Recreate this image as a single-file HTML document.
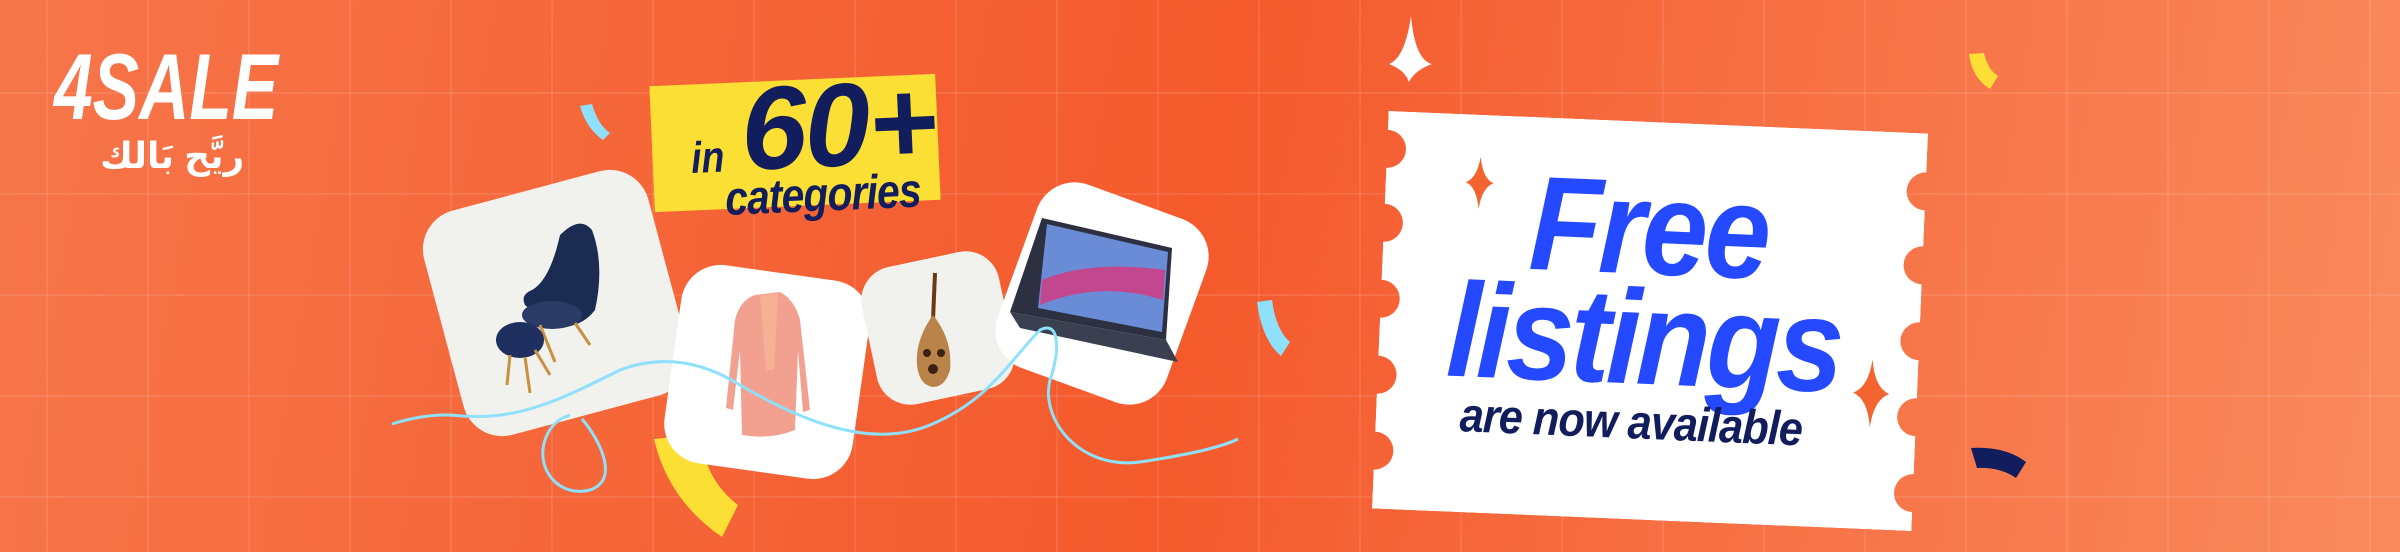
<!DOCTYPE html>
<html><head><meta charset="utf-8"><style>
*{margin:0;padding:0;box-sizing:border-box}
body{width:2400px;height:552px;overflow:hidden;position:relative;font-family:"Liberation Sans",sans-serif;
background:linear-gradient(100deg,#f6764a 0%,#f5673a 25%,#f45a2c 50%,#f6693d 65%,#f98a5c 100%);}
.grid{position:absolute;inset:0;background-image:linear-gradient(90deg,rgba(255,255,255,.09) 2px,transparent 2px),linear-gradient(0deg,rgba(255,255,255,.09) 2px,transparent 2px);background-size:101px 101px;background-position:46px 94px}
.abs{position:absolute}
.card{position:absolute;border-radius:40px}
.t{position:absolute;white-space:nowrap;font-weight:bold;font-style:italic;transform-origin:left top}
</style></head><body>
<div class="grid"></div>

<div class="t" style="left:54px;top:40px;font-size:94px;color:#fff;letter-spacing:0px;transform:scaleX(.74);line-height:1">4SALE</div>
<div class="t" style="left:100px;top:134px;font-size:36px;color:#fff;font-style:normal;font-family:'Liberation Sans','DejaVu Sans',sans-serif;line-height:1.2" dir="rtl">ريَّح بَالك</div>

<!-- confetti -->
<svg class="abs" style="left:0;top:0" width="2400" height="552">
<path d="M580 106 L592 104 Q598 125 610 133 L603 140 Q586 128 580 106Z" fill="#8ee0fb"/>
<path d="M654 439 L700 434 Q705 480 738 505 L722 537 Q668 500 654 439Z" fill="#fbdf35"/>
<path d="M1257 302 L1272 300 Q1276 330 1290 342 L1281 356 Q1262 340 1257 302Z" fill="#8ee0fb"/>
<path d="M1969 54 L1984 53 Q1988 70 1998 76 L1990 89 Q1972 78 1969 54Z" fill="#fbdf35"/>
<path d="M1971 448 Q2005 446 2026 462 L2016 478 Q2000 467 1977 468Z" fill="#111d5c"/>
<path d="M1411 16 Q1415 60 1432 64 Q1415 70 1409 82 Q1405 70 1389 64 Q1405 58 1411 16Z" fill="#fff"/>
</svg>

<!-- chair card -->
<div class="card" style="left:440px;top:187px;width:232px;height:232px;background:#f1f2ee;transform:rotate(-15deg)"></div>
<svg class="abs" style="left:480px;top:205px" width="170" height="200">
<path d="M80 30 Q100 10 112 25 Q125 60 115 105 Q100 125 70 122 L45 100 Q40 90 52 85 Q70 75 80 30Z" fill="#1c2b52"/>
<ellipse cx="72" cy="110" rx="30" ry="14" fill="#2a3b66"/>
<line x1="60" y1="120" x2="75" y2="157" stroke="#c9913f" stroke-width="3"/>
<line x1="95" y1="118" x2="110" y2="140" stroke="#c9913f" stroke-width="3"/>
<ellipse cx="40" cy="135" rx="24" ry="18" fill="#1f3060"/>
<line x1="30" y1="150" x2="27" y2="180" stroke="#c9913f" stroke-width="3"/>
<line x1="45" y1="152" x2="50" y2="188" stroke="#c9913f" stroke-width="3"/>
<line x1="55" y1="145" x2="70" y2="170" stroke="#c9913f" stroke-width="3"/>
</svg>

<!-- coat card -->
<div class="card" style="left:672px;top:272px;width:190px;height:200px;background:#fff;transform:rotate(8deg)"></div>
<svg class="abs" style="left:700px;top:280px" width="140" height="190">
<path d="M55 15 L80 12 Q95 20 100 40 L110 130 L103 132 L98 70 L95 150 Q70 160 42 155 L40 70 L33 130 L26 128 L35 40 Q40 20 55 15Z" fill="#f2a08f"/>
<path d="M60 14 L78 14 L74 90 L66 90Z" fill="#f5b095"/>
</svg>

<!-- oud card -->
<div class="card" style="left:868px;top:258px;width:140px;height:140px;background:#f1f2ee;transform:rotate(-12deg);border-radius:34px"></div>
<svg class="abs" style="left:905px;top:265px" width="60" height="130">
<line x1="30" y1="8" x2="28" y2="55" stroke="#6b3a14" stroke-width="4"/>
<path d="M28 50 Q48 75 45 105 Q40 122 28 122 Q14 120 12 100 Q10 75 28 50Z" fill="#b9834a"/>
<circle cx="22" cy="88" r="4" fill="#3a2210"/><circle cx="36" cy="88" r="4" fill="#3a2210"/><circle cx="28" cy="104" r="5" fill="#3a2210"/>
</svg>

<!-- laptop card -->
<div class="card" style="left:1012px;top:196px;width:180px;height:195px;background:#fff;transform:rotate(20deg)"></div>
<svg class="abs" style="left:1000px;top:200px" width="200" height="180">
<path d="M42 18 L172 48 L166 140 L10 112Z" fill="#2d3040"/>
<path d="M47 24 L168 52 L162 132 L38 108Z" fill="#6a8bd6"/>
<path d="M42 80 Q90 60 165 70 L163 100 Q100 80 40 105Z" fill="#c2478e"/>
<path d="M10 112 L166 140 L178 162 L20 128Z" fill="#3a4050"/>
</svg>

<!-- wave line -->
<svg class="abs" style="left:0;top:0" width="2400" height="552">
<path d="M392 424 Q430 412 462 416 C520 420 560 400 620 370 C660 355 700 360 740 385 C800 420 870 450 930 425 C990 400 1010 360 1040 330 C1060 320 1060 350 1050 380 C1040 420 1080 470 1140 462 C1180 456 1220 448 1238 439" fill="none" stroke="#8ee0fb" stroke-width="3"/>
<path d="M582 419 C600 440 620 480 590 490 C560 498 535 470 545 440 C550 425 560 418 570 415" fill="none" stroke="#8ee0fb" stroke-width="3"/>
</svg>

<!-- yellow box -->
<div class="abs" style="left:652px;top:80px;width:286px;height:126px;background:#fbdf35;transform:rotate(-2.5deg)"></div>
<div class="t" style="left:690px;top:134px;font-size:44px;color:#111d5c;transform:rotate(-2.5deg) scaleX(.85)">in</div>
<div class="t" style="left:738px;top:62px;font-size:118px;color:#111d5c;letter-spacing:-2px;transform:rotate(-2.5deg)">60+</div>
<div class="t" style="left:724px;top:172px;font-size:48px;color:#111d5c;letter-spacing:-1px;transform:rotate(-2.5deg) scaleX(.85)">categories</div>

<!-- ticket -->
<div class="abs" style="left:1380px;top:122px;width:540px;height:398px;transform:rotate(2.4deg)">
<svg width="540" height="398" style="position:absolute;left:0;top:0">
<defs><mask id="m"><rect width="540" height="398" fill="#fff"/>
<circle cx="0" cy="38" r="19" fill="#000"/><circle cx="0" cy="112" r="19" fill="#000"/><circle cx="0" cy="188" r="19" fill="#000"/><circle cx="0" cy="264" r="19" fill="#000"/><circle cx="0" cy="340" r="19" fill="#000"/>
<circle cx="540" cy="58" r="19" fill="#000"/><circle cx="540" cy="132" r="19" fill="#000"/><circle cx="540" cy="208" r="19" fill="#000"/><circle cx="540" cy="284" r="19" fill="#000"/><circle cx="540" cy="360" r="19" fill="#000"/>
</mask></defs>
<rect width="540" height="398" fill="#fff" mask="url(#m)"/>
<path d="M94 42 Q97 64 108 68 Q97 72 94 94 Q91 72 80 68 Q91 64 94 42Z" fill="#f4642f"/>
<path d="M494 228 Q497 256 512 262 Q497 268 494 296 Q491 268 476 262 Q491 256 494 228Z" fill="#f4642f"/>
</svg>
<div class="t" style="left:146px;top:40px;font-size:134px;color:#2449ff;letter-spacing:-3px;line-height:1;transform:scaleX(.88)">Free</div>
<div class="t" style="left:68px;top:150px;font-size:134px;color:#2449ff;letter-spacing:-4px;line-height:1;transform:scaleX(.9)">listings</div>
<div class="t" style="left:84px;top:278px;font-size:48px;color:#111d5c;letter-spacing:-1px;line-height:1;transform:scaleX(.9)">are now available</div>
</div>
</body></html>
